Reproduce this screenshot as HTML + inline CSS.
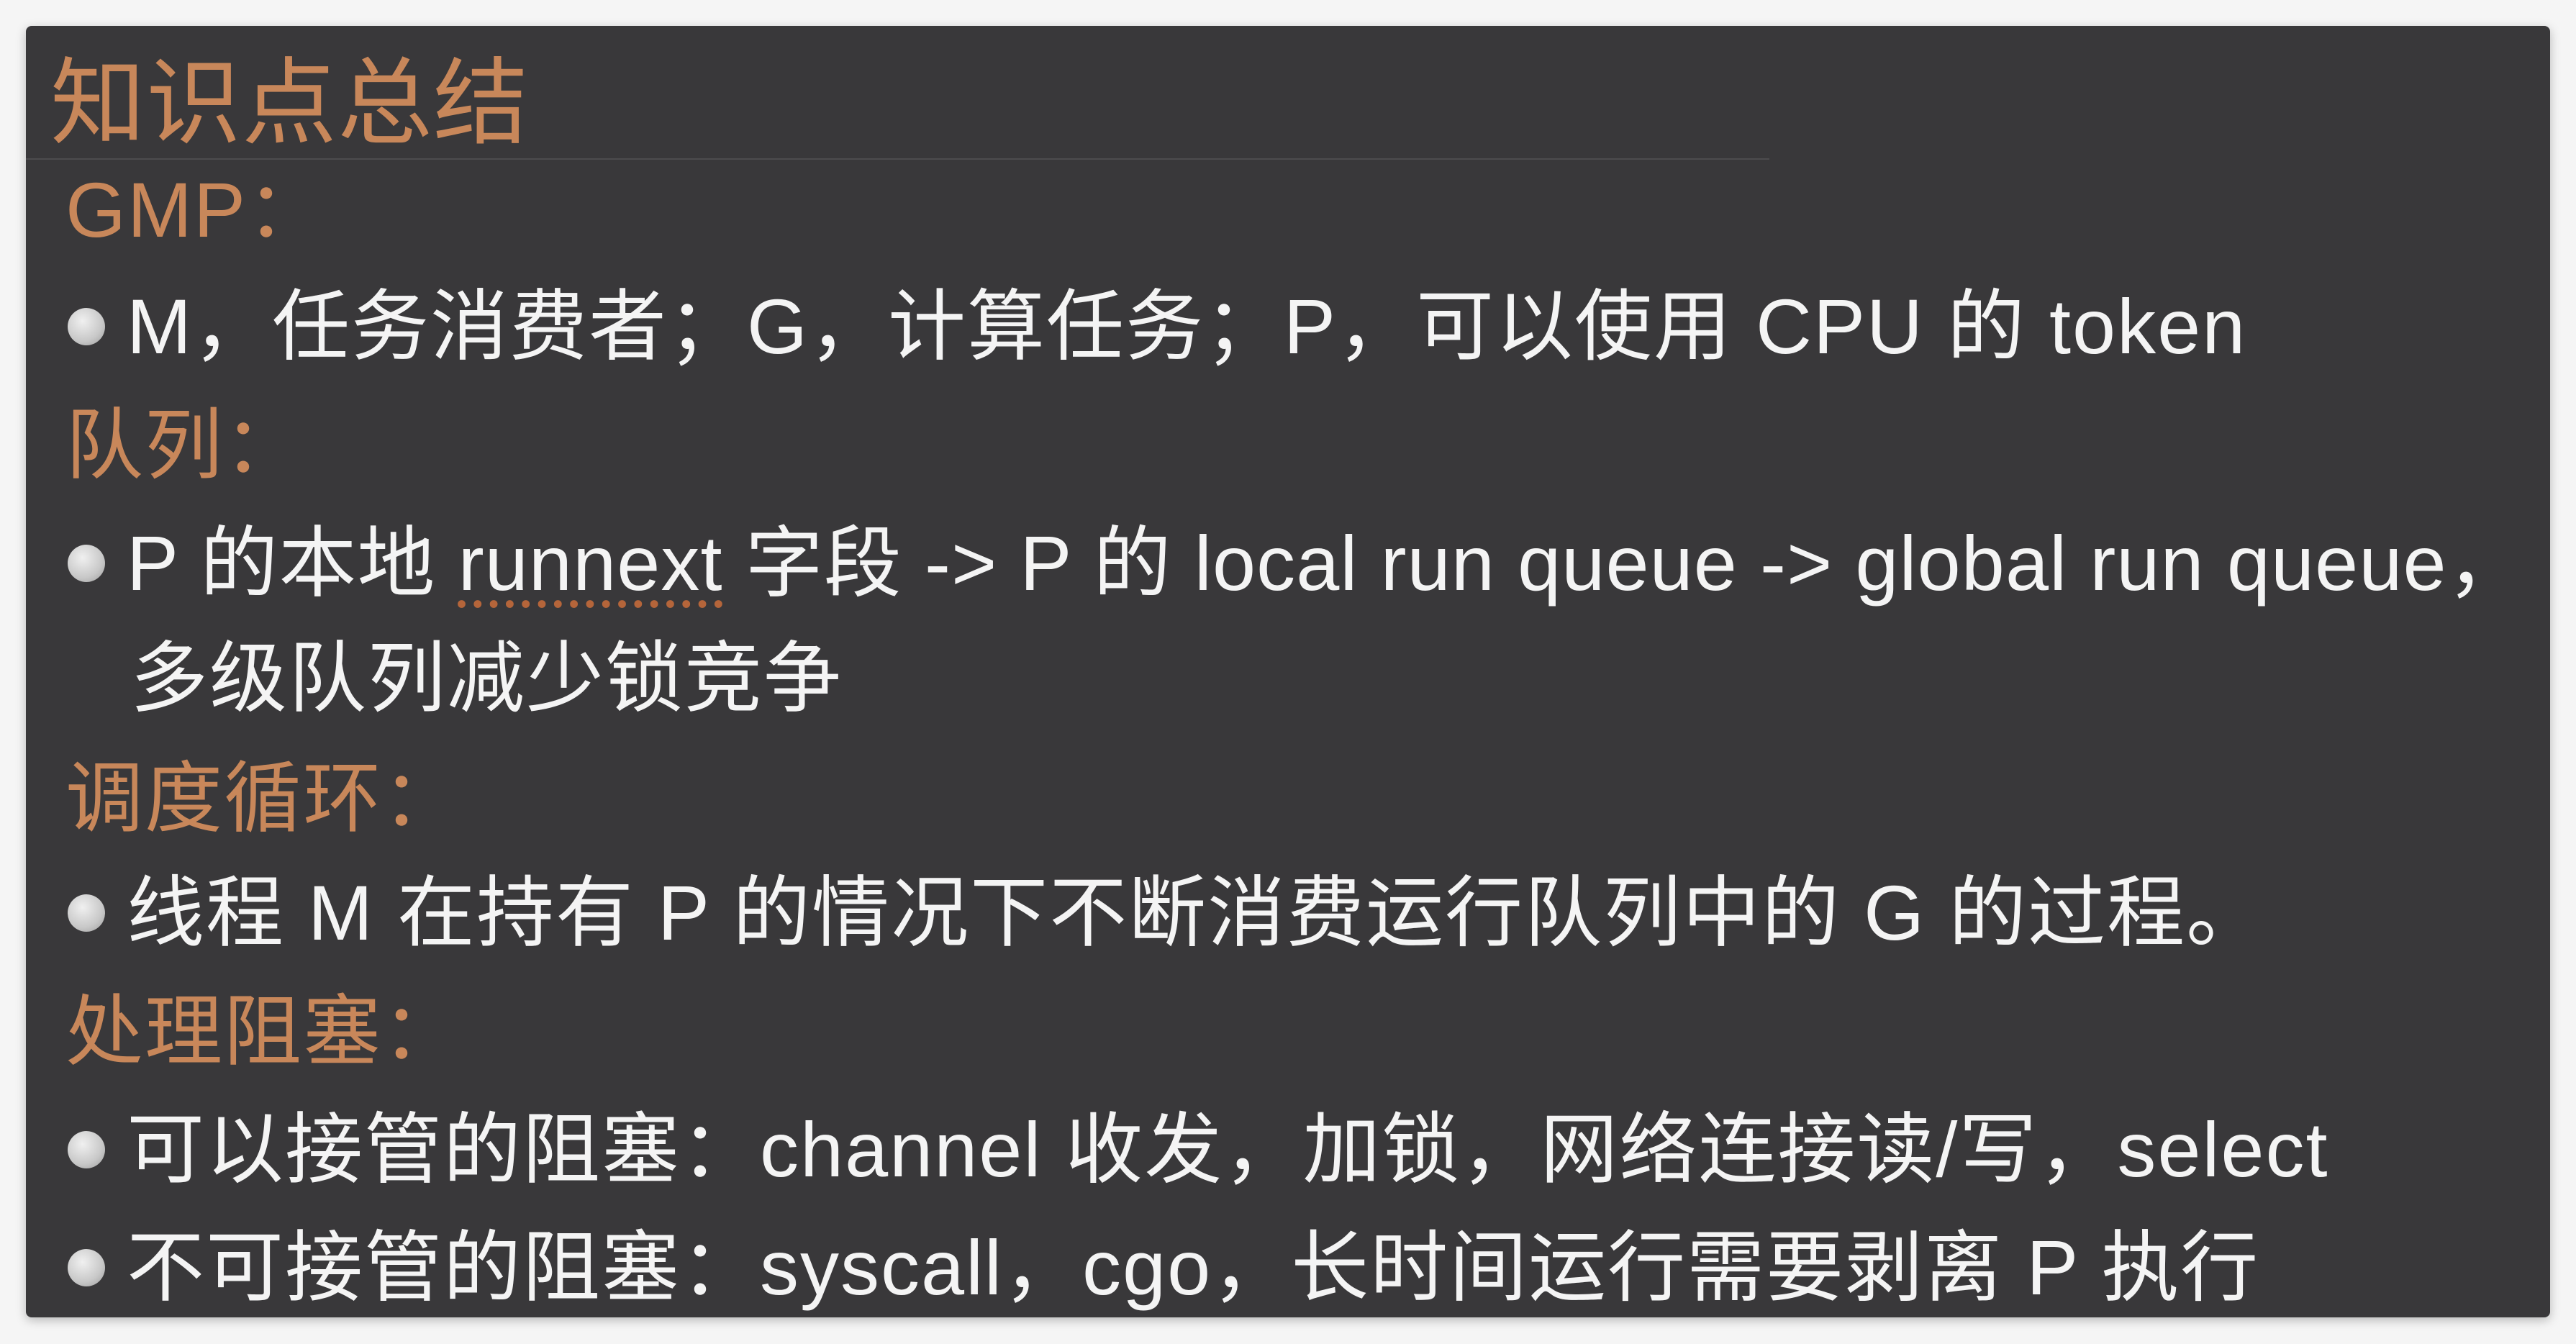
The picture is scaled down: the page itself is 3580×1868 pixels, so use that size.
<!DOCTYPE html>
<html><head><meta charset="utf-8"><style>
html,body{margin:0;padding:0;}
body{width:3580px;height:1868px;background:#f5f5f5;position:relative;overflow:hidden;font-family:"Liberation Sans","Noto Sans CJK SC",sans-serif;}
.panel{position:absolute;left:36px;top:36px;width:3508px;height:1795px;background:#39383a;border-radius:8px;box-shadow:0 4px 14px rgba(0,0,0,0.25);}
.t{position:absolute;white-space:nowrap;height:160px;line-height:160px;font-size:108px;letter-spacing:2px;color:#f4f4f4;}
.o{color:#c8875a;}
.b{position:absolute;left:94px;width:52px;height:52px;border-radius:50%;background:radial-gradient(circle at 40% 35%,#f0f0f0,#c8c8c8 60%,#9a9a9a);}
.rule{position:absolute;left:36px;top:220px;width:2423px;height:2px;background:#4d4c4e;}
</style></head><body>
<div class="panel"></div>
<div class="rule"></div>
<div class="t o" style="left:70px;top:64px;font-size:132px;letter-spacing:1px;">知识点总结</div>
<div class="t o" style="left:91px;top:212px;">GMP：</div>
<div class="b" style="top:428px"></div>
<div class="t" style="left:176px;top:374px;">M，任务消费者；G，计算任务；P，可以使用 CPU 的 token</div>
<div class="t o" style="left:91px;top:539px;">队列：</div>
<div class="b" style="top:757px"></div>
<div class="t" style="left:176px;top:703px;letter-spacing:1.1px;">P 的本地 <span style="text-decoration:underline dotted #b5653a;text-underline-offset:14px;">runnext</span> 字段 -&gt; P 的 local run queue -&gt; global run queue，</div>
<div class="t" style="left:181px;top:863px;">多级队列减少锁竞争</div>
<div class="t o" style="left:91px;top:1030px;">调度循环：</div>
<div class="b" style="top:1243px"></div>
<div class="t" style="left:176px;top:1189px;">线程 M 在持有 P 的情况下不断消费运行队列中的 G 的过程。</div>
<div class="t o" style="left:91px;top:1354px;">处理阻塞：</div>
<div class="b" style="top:1572px"></div>
<div class="t" style="left:176px;top:1518px;">可以接管的阻塞：channel 收发，加锁，网络连接读/写，select</div>
<div class="b" style="top:1736px"></div>
<div class="t" style="left:176px;top:1682px;">不可接管的阻塞：syscall，cgo，长时间运行需要剥离 P 执行</div>
</body></html>
